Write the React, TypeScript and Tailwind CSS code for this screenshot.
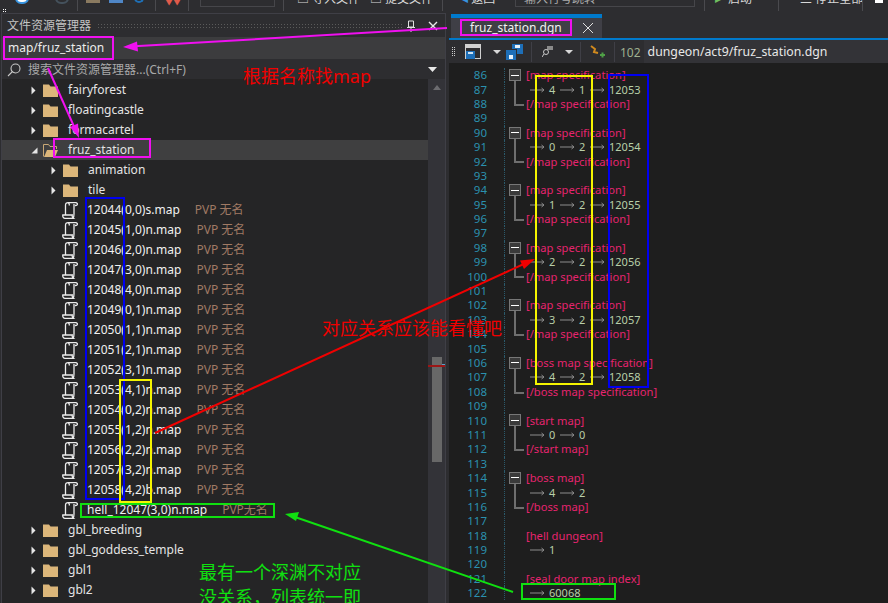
import React from "react";

const ui = { fontFamily: '"Noto Sans", "Noto Sans CJK SC", sans-serif' };

type TreeRow =
  | { kind: "folder"; name: string; depth: 1 | 2; open?: boolean; active?: boolean }
  | { kind: "file"; name: string; note: string };

const maps = [
  "12044(0,0)s.map",
  "12045(1,0)n.map",
  "12046(2,0)n.map",
  "12047(3,0)n.map",
  "12048(4,0)n.map",
  "12049(0,1)n.map",
  "12050(1,1)n.map",
  "12051(2,1)n.map",
  "12052(3,1)n.map",
  "12053(4,1)n.map",
  "12054(0,2)n.map",
  "12055(1,2)n.map",
  "12056(2,2)n.map",
  "12057(3,2)n.map",
  "12058(4,2)b.map",
];

const rows: TreeRow[] = [
  { kind: "folder", name: "fairyforest", depth: 1 },
  { kind: "folder", name: "floatingcastle", depth: 1 },
  { kind: "folder", name: "formacartel", depth: 1 },
  { kind: "folder", name: "fruz_station", depth: 1, open: true, active: true },
  { kind: "folder", name: "animation", depth: 2 },
  { kind: "folder", name: "tile", depth: 2 },
  ...maps.map((name): TreeRow => ({ kind: "file", name, note: "PVP 无名" })),
  { kind: "file", name: "hell_12047(3,0)n.map", note: "PVP无名" },
  { kind: "folder", name: "gbl_breeding", depth: 1 },
  { kind: "folder", name: "gbl_goddess_temple", depth: 1 },
  { kind: "folder", name: "gbl1", depth: 1 },
  { kind: "folder", name: "gbl2", depth: 1 },
];

type Fold = "box" | "stem" | "end" | null;
type Line = { fold: Fold; tag?: string; values?: string[] };

function mapBlock(a: string, b: string, id: string, tag = "map specification"): Line[] {
  return [
    { fold: "box", tag: `[${tag}]` },
    { fold: "stem", values: [a, b, id] },
    { fold: "end", tag: `[/${tag}]` },
    { fold: null },
  ];
}

const lines: Line[] = [
  ...mapBlock("4", "1", "12053"),
  ...mapBlock("0", "2", "12054"),
  ...mapBlock("1", "2", "12055"),
  ...mapBlock("2", "2", "12056"),
  ...mapBlock("3", "2", "12057"),
  ...mapBlock("4", "2", "12058", "boss map specification"),
  { fold: "box", tag: "[start map]" },
  { fold: "stem", values: ["0", "0"] },
  { fold: "end", tag: "[/start map]" },
  { fold: null },
  { fold: "box", tag: "[boss map]" },
  { fold: "stem", values: ["4", "2"] },
  { fold: "end", tag: "[/boss map]" },
  { fold: null },
  { fold: null, tag: "[hell dungeon]" },
  { fold: null, values: ["1"] },
  { fold: null },
  { fold: null, tag: "[seal door map index]" },
  { fold: null, values: ["60068"] },
];

function Folder({ open }: { open?: boolean }) {
  return (
    <svg width="15" height="13" viewBox="0 0 15 13" className="shrink-0">
      {open ? (
        <>
          <path d="M.5 12.500V.5h5l1.500 2h6.500V5" fill="none" stroke="#c9a876" />
          <path d="M1 13l3-7h11l-3 7z" fill="#dcb67a" />
        </>
      ) : (
        <path d="M0 .5h6l1.500 2H15V13H0z" fill="#dcb67a" />
      )}
    </svg>
  );
}

function ScrollIcon() {
  return (
    <svg width="16" height="17" viewBox="0 0 16 17" fill="none" stroke="#ececec" strokeWidth="1.3" className="shrink-0">
      <path d="M3.500 13V3.200C3.500 1.500 4.500.7 6 .7h7.800c1.300 0 1.800 1 1.500 1.900-.2.700-1 1-2.300.9" />
      <path d="M6.300 .9c1 .5 1.200 1.500 1 2.600M12 2v10" />
      <path d="M.8 13h9.500c-.3 1.300 0 2.600 1 3.300H3c-1.500 0-2.500-1.500-2.200-3.300z" />
      <path d="M12 12c0 2-.2 3.500-1 4.300" />
    </svg>
  );
}

function Expander({ open }: { open?: boolean }) {
  if (open) {
    return (
      <svg width="7" height="7" viewBox="0 0 7 7" className="shrink-0">
        <path d="M6.500 0.500V6.500H0.500z" fill="#e6e6e6" />
      </svg>
    );
  }
  return (
    <svg width="5" height="9" viewBox="0 0 5 9" className="shrink-0">
      <path d="M0.500 0.500L4.500 4.500L0.500 8.500z" fill="#e6e6e6" />
    </svg>
  );
}

function TreeItem({ row }: { row: TreeRow }) {
  if (row.kind === "file") {
    return (
      <div className="flex h-5 items-center pl-[60px] text-[12px] text-[#f1f1f1]">
        <ScrollIcon />
        <span className="ml-[9px]">{row.name}</span>
        <span className="ml-[15px] text-[#a07a64]">{row.note}</span>
      </div>
    );
  }
  const indent = row.depth === 1 ? "pl-[29px]" : "pl-[49px]";
  return (
    <div className={`flex h-5 items-center text-[12px] text-[#e4e4e4] ${indent} ${row.active ? "bg-[#3f3f40]" : ""}`}>
      <span className="flex w-[12px] shrink-0 items-center">
        <Expander open={row.open} />
      </span>
      <Folder open={row.open} />
      <span className="ml-[10px]">{row.name}</span>
    </div>
  );
}

function TabArrow() {
  return (
    <svg width="15" height="6" viewBox="0 0 15 6" className="shrink-0" fill="none" stroke="#8c8c8c">
      <path d="M0 3h14M11.500 1L14 3l-2.500 2" />
    </svg>
  );
}

function FoldMark({ fold }: { fold: Fold }) {
  return (
    <div className="relative h-full w-[16px] shrink-0">
      {fold === "box" && (
        <div className="absolute left-[-1px] top-[1px] flex h-[12px] w-[12px] items-center justify-center border border-[#777] bg-[#3a3a3a]">
          <div className="h-[1px] w-[8px] bg-white" />
        </div>
      )}
      {fold === "box" && <div className="absolute left-[4px] top-[13px] bottom-0 w-[2px] bg-[#6e6e6e]" />}
      {fold === "stem" && <div className="absolute left-[4px] top-0 bottom-0 w-[2px] bg-[#6e6e6e]" />}
      {fold === "end" && <div className="absolute left-[4px] top-0 h-[9px] w-[10px] border-b-2 border-l-2 border-[#6e6e6e]" />}
    </div>
  );
}

function EditorLine({ line, no }: { line: Line; no: number }) {
  return (
    <div className="flex h-[14.4px] items-center whitespace-nowrap leading-[14px]">
      <span className="w-[38px] shrink-0 text-right text-[11.500px] text-[#2b91af]">{no}</span>
      <span className="ml-[17px] mr-[5px] h-full w-[1px] shrink-0 border-l border-dotted border-[#2b5a6b]" />
      <FoldMark fold={line.fold} />
      {line.tag && <span className="text-[11.200px] text-[#e6246f]">{line.tag}</span>}
      {line.values && (
        <div className="ml-[4px] flex items-center text-[11px] text-[#b8cfa8]">
          {line.values.map((v, i) => (
            <React.Fragment key={i}>
              <TabArrow />
              <span className={v.length > 1 ? "ml-[4px]" : "ml-[4px] w-[11px]"}>{v}</span>
            </React.Fragment>
          ))}
        </div>
      )}
    </div>
  );
}

function ToolSep({ className = "" }: { className?: string }) {
  return <div className={`mb-[2px] h-[11px] w-[1px] shrink-0 bg-[#4a4a4e] ${className}`} />;
}

function TopToolbar() {
  return (
    <div className="flex h-[13px] shrink-0 items-end overflow-hidden whitespace-nowrap text-[12px] leading-[14px] text-[#d8d8d8]">
      <div className="ml-[3px] mb-[1px] grid shrink-0 grid-cols-2 gap-[1px]">
        <i className="h-[1px] w-[1px] bg-white" />
        <i className="h-[1px] w-[1px] bg-white" />
        <i className="h-[1px] w-[1px] bg-white" />
        <i className="h-[1px] w-[1px] bg-white" />
      </div>
      <div className="ml-[9px] mb-[9px] h-[12px] w-[14px] shrink-0 rounded-full border-2 border-[#3794e0] bg-white" />
      <div className="ml-[26px] mb-[9px] h-[12px] w-[14px] shrink-0 rounded-full border-2 border-[#44515c]" />
      <ToolSep className="ml-[8px]" />
      <div className="ml-[8px] mb-[10px] h-[8px] w-[14px] shrink-0 bg-[#8a7a60]" />
      <div className="ml-[9px] mb-[10px] h-[8px] w-[14px] shrink-0 bg-[#4f86c6]" />
      <div className="ml-[11px] mb-[10px] h-[8px] w-[10px] shrink-0 rounded-b-full border-2 border-t-0 border-[#1f6fb5]" />
      <ToolSep className="ml-[11px]" />
      <div className="ml-[9px] mb-[10px] w-[15px] shrink-0 text-[8px] leading-[3px] text-[#e05a4a]">▼▼</div>
      <ToolSep className="ml-[8px]" />
      <div className="ml-[11px] mb-[6px] h-[8px] w-[75px] shrink-0 border border-t-0 border-[#46464a]" />
      <ToolSep className="ml-[8px]" />
      <div className="ml-[13px] mb-[7px] w-[73px] shrink-0">□ 导入文件</div>
      <div className="mb-[7px] w-[72px] shrink-0">□ 提交文件</div>
      <ToolSep />
      <div className="ml-[19px] mb-[7px] w-[53px] shrink-0">
        <span className="text-[#3794e0]">◂ </span>返回
      </div>
      <div className="mb-[6px] flex h-[8px] w-[180px] shrink-0 items-end overflow-hidden border border-t-0 border-[#46464a] pl-[8px] text-[#aaa]">
        输入行号跳转
      </div>
      <ToolSep className="ml-[9px]" />
      <div className="ml-[10px] mb-[7px] w-[63px] shrink-0">
        <span className="mr-[7px] text-[#6fbf5f]">▸</span>启动
      </div>
      <ToolSep />
      <div className="ml-[9px] mb-[7px] w-[74px] shrink-0">
        <span className="text-[#c0392b]">▪</span>三 停止全部
      </div>
      <ToolSep />
      <div className="ml-[12px] mb-[10px] h-[3px] w-[8px] shrink-0 bg-white" />
    </div>
  );
}

function SidePanel() {
  return (
    <div className="ml-[1px] flex w-[445px] shrink-0 flex-col border border-b-0 border-[#3f3f46]">
      <div className="flex h-[23px] shrink-0 items-center pl-[5px] text-[12px] text-[#c4c4c4]">
        <span>文件资源管理器</span>
        <div className="ml-[6px] h-[5px] w-[305px] bg-[radial-gradient(#5a5a5a_0.6px,transparent_0.7px)] bg-[length:3px_3px]" />
        <svg width="10" height="12" viewBox="0 0 10 12" className="ml-[4px]" fill="none" stroke="#e0e0e0">
          <path d="M2.500 1h5v6h-5zM1 7.500h8M5 8v4" />
        </svg>
        <svg width="10" height="10" viewBox="0 0 10 10" className="ml-[12px]" fill="none" stroke="#e8e8e8" strokeWidth="1.4">
          <path d="M1 1l8 8M9 1l-8 8" />
        </svg>
      </div>
      <div className="flex h-[22px] shrink-0 items-center bg-[#3c3c3e] pl-[6px] text-[12px] text-[#ececec]">map/fruz_station</div>
      <div className="flex h-[20px] shrink-0 items-center pl-[5px] pt-[1px] text-[12px] text-[#a8a8a8]">
        <svg width="14" height="14" viewBox="0 0 14 14" fill="none" stroke="#c8c8c8" strokeWidth="1.1">
          <circle cx="8.500" cy="5.500" r="4.500" />
          <path d="M5.500 8.500L1 13" />
        </svg>
        <span className="ml-[7px]">搜索文件资源管理器...(Ctrl+F)</span>
        <svg width="9" height="5" viewBox="0 0 9 5" className="ml-auto mr-[8px]">
          <path d="M0 0h9L4.500 5z" fill="#e8e8e8" />
        </svg>
      </div>
      <div className="flex min-h-0 flex-1">
        <div className="min-w-0 flex-1 overflow-hidden bg-[#252526]">
          <div className="h-[1px]" />
          {rows.map((row, i) => (
            <TreeItem key={i} row={row} />
          ))}
        </div>
        <div className="relative flex w-[17px] shrink-0 flex-col items-center bg-[#333338]">
          <svg width="8" height="5" viewBox="0 0 8 5" className="mt-[6px]">
            <path d="M0 5h8L4 0z" fill="#6c6c70" />
          </svg>
          <div className="mt-[267px] h-[105px] w-[10px] bg-[#686868]" />
          <div className="absolute left-0 right-0 top-[286px] h-[2px] bg-[#9c1616]" />
          <div className="absolute right-0 top-[285px] h-[1px] w-[3px] bg-[#5aa0c8]" />
        </div>
      </div>
    </div>
  );
}

function EditorToolbar() {
  return (
    <div className="flex h-[23px] shrink-0 items-center">
      <div className="ml-[3px] grid grid-cols-2 gap-[1px]">
        {[0, 1, 2, 3, 4, 5, 6, 7, 8, 9].map((i) => (
          <i key={i} className="h-[1px] w-[1px] bg-[#ccc]" />
        ))}
      </div>
      <svg width="17" height="17" viewBox="0 0 17 17" className="ml-[10px]">
        <rect x="0.500" y="1.500" width="15" height="14" fill="#2d2d30" stroke="#d0d0d0" />
        <rect x="1" y="2" width="14" height="3" fill="#d0d0d0" />
        <rect x="1" y="8" width="9" height="8" fill="#1e6fb8" />
        <rect x="3" y="9" width="5" height="2" fill="#cfe4f5" />
      </svg>
      <svg width="8" height="4" viewBox="0 0 8 4" className="ml-[11px]">
        <path d="M0 0h8L4 4z" fill="#d8d8d8" />
      </svg>
      <svg width="17" height="16" viewBox="0 0 17 16" className="ml-[5px]">
        <path d="M6 0h11v10h-6V5H6z" fill="#1e6fb8" />
        <rect x="9" y="1" width="5" height="3" fill="#e8f2fa" />
        <path d="M0 6h10v10H0z" fill="#1e6fb8" />
        <rect x="3" y="11" width="4" height="4" fill="#e8f2fa" />
      </svg>
      <div className="ml-[8px] h-[20px] w-[1px] bg-[#3f3f46]" />
      <svg width="12" height="13" viewBox="0 0 12 13" className="ml-[10px]" fill="none">
        <rect x="5" y="1" width="6" height="4" fill="#8a8a8a" />
        <circle cx="4" cy="7" r="2.500" stroke="#c8c8c8" />
        <path d="M2 9l-2 3" stroke="#c8c8c8" />
      </svg>
      <svg width="8" height="4" viewBox="0 0 8 4" className="ml-[11px]">
        <path d="M0 0h8L4 4z" fill="#d8d8d8" />
      </svg>
      <div className="ml-[7px] h-[20px] w-[1px] bg-[#3f3f46]" />
      <svg width="15" height="15" viewBox="0 0 15 15" className="ml-[9px]" fill="none">
        <path d="M1 2l4 3-1 3 4 1" stroke="#d08a1e" strokeWidth="2" />
        <path d="M10 11h5M12.500 8.500v5" stroke="#4f9f46" strokeWidth="2" />
      </svg>
      <div className="ml-[9px] h-[20px] w-[1px] bg-[#3f3f46]" />
      <span className="ml-[5px] pt-[2px] text-[12px] text-[#9fb08f]">102</span>
      <div className="ml-[3px] flex h-full flex-1 items-center bg-[#333337] pl-[4px] pt-[2px] text-[12.300px] text-[#e8e8e8]">
        dungeon/act9/fruz_station.dgn
      </div>
    </div>
  );
}

function EditorPanel() {
  return (
    <div className="ml-[3px] mt-[1px] flex min-w-0 flex-1 flex-col">
      <div className="flex h-[24px] shrink-0">
        <div className="ml-[2px] flex w-[151px] items-center border-t-[4px] border-[#007acc] bg-[#3f3f46] pl-[19px] text-[12px] text-[#f1f1f1]">
          fruz_station.dgn
          <svg width="10" height="10" viewBox="0 0 10 10" className="ml-[21px]" fill="none" stroke="#e0e0e0">
            <path d="M0 0l10 10M10 0L0 10" />
          </svg>
        </div>
      </div>
      <div className="h-[2px] shrink-0 bg-[#007acc]" />
      <EditorToolbar />
      <div className="flex-1 overflow-hidden bg-[#1e1e1e] pt-[5px]">
        {lines.map((line, i) => (
          <EditorLine key={i} line={line} no={86 + i} />
        ))}
      </div>
    </div>
  );
}

function Annotations() {
  return (
    <div className="pointer-events-none absolute inset-0">
      <div className="absolute left-[3px] top-[36px] h-[24px] w-[111px] border-2 border-[#f010f0]" />
      <div className="absolute left-[53px] top-[138px] h-[20px] w-[98px] border-2 border-[#f010f0]" />
      <div className="absolute left-[460px] top-[19px] h-[17px] w-[112px] border-2 border-[#f010f0]" />
      <div className="absolute left-[85px] top-[197px] h-[303px] w-[40px] border-2 border-[#0000f0]" />
      <div className="absolute left-[608px] top-[74px] h-[314px] w-[41px] border-2 border-[#0000f0]" />
      <div className="absolute left-[119px] top-[379px] h-[124px] w-[33px] border-2 border-[#f4f400]" />
      <div className="absolute left-[535px] top-[75px] h-[310px] w-[58px] border-2 border-[#f4f400]" />
      <div className="absolute left-[80px] top-[503px] h-[15px] w-[195px] border-2 border-[#10e010]" />
      <div className="absolute left-[521px] top-[583px] h-[17px] w-[95px] border-2 border-[#10e010]" />
      <svg width="888" height="603" className="absolute inset-0">
        <path d="M447 28L130 46.500" stroke="#f010f0" strokeWidth="2" />
        <path d="M123 47l14-5.500 1 10z" fill="#f010f0" />
        <path d="M48 68L76 131" stroke="#f010f0" strokeWidth="2" />
        <path d="M79 138l-9-11 8-3.500z" fill="#f010f0" />
        <path d="M155 433L526 263" stroke="#f00000" strokeWidth="2" />
        <path d="M535 259l-11 10-4-8.500z" fill="#f00000" />
        <path d="M513 592L292 516" stroke="#10e010" strokeWidth="2" />
        <path d="M285 514l14-2-3 9z" fill="#10e010" />
      </svg>
      <div className="absolute left-[243px] top-[64px] text-[18px] leading-6 text-[#f00000]">根据名称找map</div>
      <div className="absolute left-[322px] top-[316px] text-[18px] leading-6 text-[#f00000]">对应关系应该能看懂吧</div>
      <div className="absolute left-[199px] top-[560px] text-[18px] leading-[25px] text-[#10e010]">
        <div>最有一个深渊不对应</div>
        <div>没关系，列表统一即</div>
      </div>
    </div>
  );
}

export default function App() {
  return (
    <div className="relative flex h-[603px] w-[888px] flex-col overflow-hidden bg-[#2d2d30]" style={ui}>
      <TopToolbar />
      <div className="flex min-h-0 flex-1">
        <SidePanel />
        <EditorPanel />
      </div>
      <Annotations />
    </div>
  );
}
